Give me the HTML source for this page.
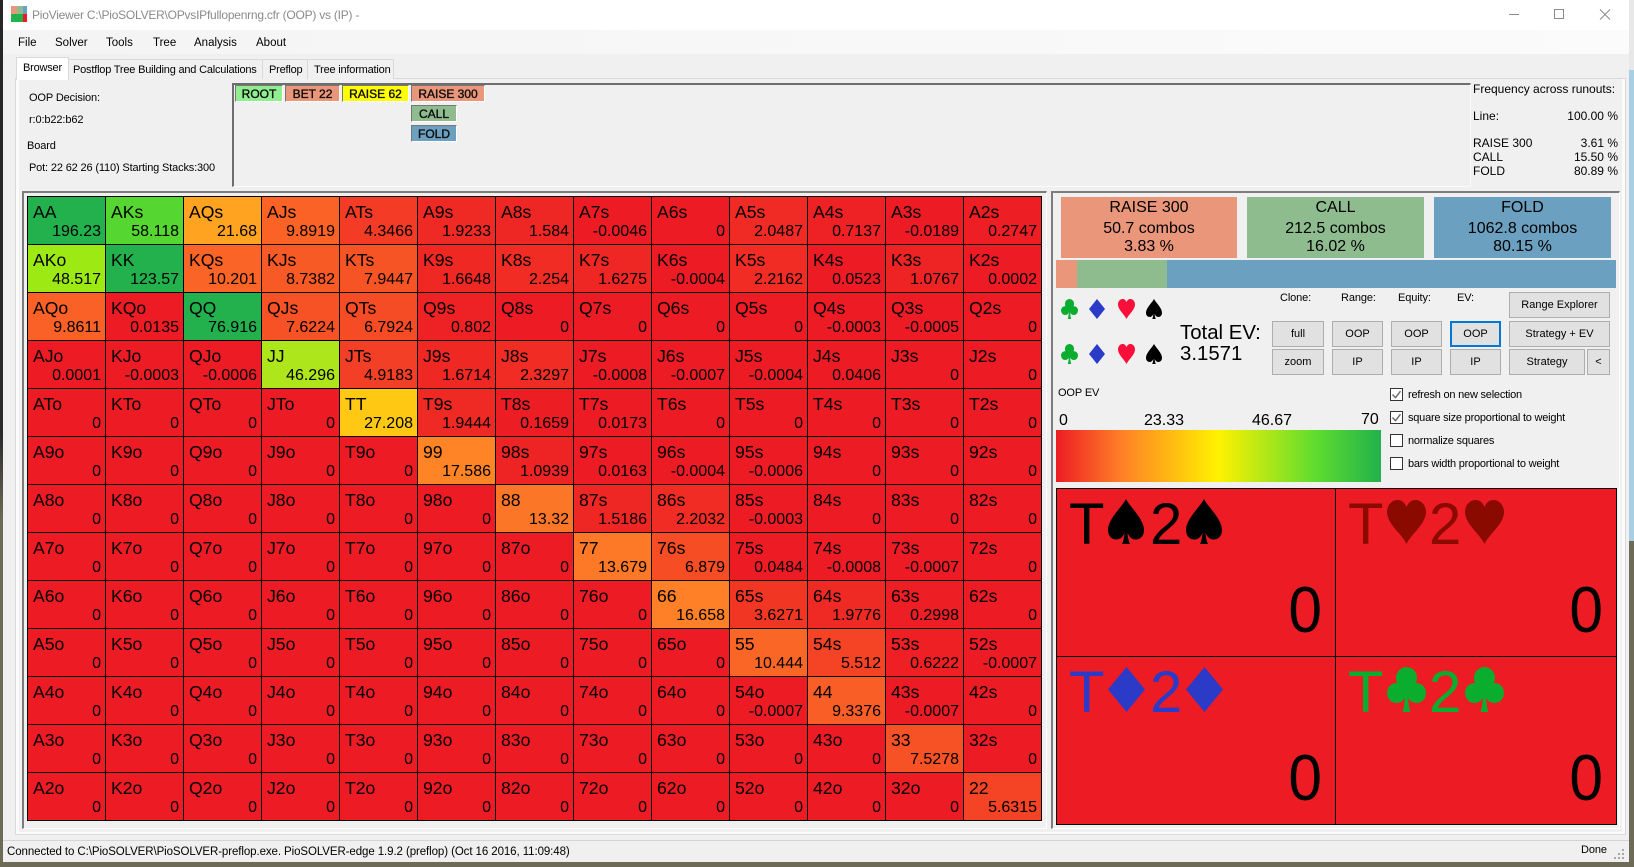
<!DOCTYPE html>
<html><head><meta charset="utf-8"><title>PioViewer</title>
<style>
html,body{margin:0;padding:0;background:#6e6a58}
body{width:1634px;height:867px;overflow:hidden;position:relative;font-family:"Liberation Sans",sans-serif;color:#000;font-size:11px;letter-spacing:-.12px}
.a{position:absolute;white-space:nowrap}
svg{position:absolute;display:block}
.win{position:absolute;left:3px;top:0;width:1626px;height:862px;background:#f0f0f0}
.tb{position:absolute;box-sizing:border-box;background:#e1e1e1;border:1px solid #adadad;font-size:11px;letter-spacing:0;text-align:center;line-height:24px;white-space:nowrap}
.tree{position:absolute;box-sizing:border-box;border:1px solid;border-color:#777 #fff #fff #777;font-size:12px;letter-spacing:0;text-align:center;line-height:16px;-webkit-text-stroke:.35px #000;color:#111}
.tab{position:absolute;box-sizing:border-box;border:1px solid #d9d9d9;border-bottom:0;background:#f0f0f0;top:59px;height:20px;font-size:11px;letter-spacing:-.2px;line-height:21px;white-space:nowrap}
.g{position:absolute;left:27px;top:196px;width:1015px;height:625px;box-sizing:border-box;display:grid;grid-template-columns:repeat(13,78px);grid-template-rows:repeat(13,48px);border-right:1px solid #000;border-bottom:1px solid #000;background:#ed1c24;letter-spacing:0}
.g p{margin:0;position:relative;box-sizing:border-box;border-left:1px solid #000;border-top:1px solid #000;background:#ed1c24;width:78px;height:48px}
.g b{position:absolute;left:5px;top:5px;font-weight:normal;font-size:17.6px;line-height:20px;white-space:nowrap}
.g i{position:absolute;right:4px;top:26px;font-style:normal;font-size:16px;line-height:18px;white-space:nowrap}
.box{position:absolute;top:197px;height:61px;text-align:center;font-size:16px;letter-spacing:0}
.box div{position:absolute;left:0;right:0;line-height:18px}
.cb{position:absolute;left:1390px;width:13px;height:13px;box-sizing:border-box;border:1px solid #333;background:#fff}
.cl{position:absolute;left:1408px;font-size:11px;letter-spacing:-.22px;white-space:nowrap;line-height:14px}
.card{position:absolute;font-size:58px;line-height:66px;white-space:nowrap;letter-spacing:0}
.z{position:absolute;font-size:65px;line-height:70px;width:60px;text-align:right;letter-spacing:0;transform:scaleX(.93);transform-origin:100% 50%}
.f{position:absolute;left:1473px;width:145px;font-size:12px;letter-spacing:0;line-height:14px;white-space:nowrap}
.f span{position:absolute;right:0;top:0}
.m{position:absolute;top:36px;font-size:11.5px;letter-spacing:0;line-height:15px;white-space:nowrap}
</style></head>
<body>
<div class="a" style="left:0;top:0;width:3px;height:867px;background:linear-gradient(#262626 0,#2a2a2a 50%,#6e6a58 60%)"></div>
<div class="a" style="left:1629px;top:0;width:5px;height:70px;background:#e8e8e8"></div>
<div class="a" style="left:1629px;top:70px;width:5px;height:471px;background:#a9cfe2"></div>
<div class="win"></div>

<!-- title bar -->
<div class="a" style="left:3px;top:0;width:1626px;height:30px;background:#fff"></div>
<div class="a" style="left:11px;top:6px;width:16px;height:8px;background:linear-gradient(90deg,#e9967a 0 37%,#8fbc8f 37% 75%,#6ca0c0 75%)"></div>
<div class="a" style="left:11px;top:14px;width:16px;height:8px;background:linear-gradient(90deg,#22b14c 0 75%,#ed1c24 75%)"></div>
<div class="a" style="left:32px;top:7px;font-size:12px;line-height:16px;color:#8a8a8a;letter-spacing:-.23px">PioViewer C:\PioSOLVER\OPvsIPfullopenrng.cfr (OOP) vs (IP) -</div>
<svg style="left:1505px;top:6px" width="120" height="16" viewBox="0 0 120 16" fill="none" stroke="#8a8a8a" stroke-width="1"><path d="M4 8.5H14"/><path d="M49.5 3.5h9v9h-9z"/><path d="M95 3.5l10 10M105 3.5l-10 10"/></svg>

<!-- menu -->
<div class="a" style="left:3px;top:30px;width:1626px;height:24px;background:linear-gradient(90deg,#f4f4f4,#fbfbfb)"></div>
<div class="m" style="left:18px">File</div>
<div class="m" style="left:55px">Solver</div>
<div class="m" style="left:106px">Tools</div>
<div class="m" style="left:153px">Tree</div>
<div class="m" style="left:194px">Analysis</div>
<div class="m" style="left:256px">About</div>

<!-- tab panel -->
<div class="a" style="left:15px;top:78px;width:1611px;height:757px;box-sizing:border-box;border:1px solid #d9d9d9;background:#fbfbfb"></div>
<div class="a" style="left:19px;top:79px;width:1603px;height:753px;background:#f0f0f0"></div>
<div class="tab" style="left:68px;width:195px;padding-left:4px">Postflop Tree Building and Calculations</div>
<div class="tab" style="left:262px;width:46px;padding-left:6px">Preflop</div>
<div class="tab" style="left:307px;width:87px;padding-left:6px">Tree information</div>
<div class="tab" style="left:16px;width:53px;top:57px;height:23px;padding-left:6px;background:#fff;z-index:2">Browser</div>

<!-- top-left info -->
<div class="a" style="left:29px;top:91px;line-height:14px">OOP Decision:</div>
<div class="a" style="left:29px;top:113px;line-height:14px">r:0:b22:b62</div>
<div class="a" style="left:27px;top:139px;line-height:14px">Board</div>
<div class="a" style="left:29px;top:161px;line-height:14px;letter-spacing:-.15px">Pot: 22 62 26 (110) Starting Stacks:300</div>

<!-- tree box -->
<div class="a" style="left:232px;top:83px;width:1239px;height:104px;box-sizing:border-box;border:2px solid #6e6e6e;border-right:1px solid #fbfbfb;border-bottom:1px solid #fbfbfb"></div>
<div class="tree" style="left:235px;top:85px;width:48px;height:17px;background:#90ee90">ROOT</div>
<div class="tree" style="left:285px;top:85px;width:55px;height:17px;background:#e9967a">BET 22</div>
<div class="tree" style="left:342px;top:85px;width:67px;height:17px;background:#ffff00">RAISE 62</div>
<div class="tree" style="left:411px;top:85px;width:74px;height:17px;background:#e9967a">RAISE 300</div>
<div class="tree" style="left:411px;top:105px;width:46px;height:17px;background:#8fbc8f">CALL</div>
<div class="tree" style="left:411px;top:125px;width:46px;height:17px;background:#6ca0c0">FOLD</div>

<!-- frequency -->
<div class="f" style="top:82px">Frequency across runouts:</div>
<div class="f" style="top:109px">Line:<span>100.00 %</span></div>
<div class="f" style="top:136px">RAISE 300<span>3.61 %</span></div>
<div class="f" style="top:150px">CALL<span>15.50 %</span></div>
<div class="f" style="top:164px">FOLD<span>80.89 %</span></div>

<!-- grid frame -->
<div class="a" style="left:22px;top:191px;width:1025px;height:638px;box-sizing:border-box;border:2px solid #7c7c7c;border-right:1px solid #fff;border-bottom:1px solid #fff"></div>
<div class="g">
<p style="background:#22b14c"><b>AA</b><i>196.23</i></p><p style="background:#55d630"><b>AKs</b><i>58.118</i></p><p style="background:#ffa320"><b>AQs</b><i>21.68</i></p><p style="background:#fa6226"><b>AJs</b><i>9.8919</i></p><p style="background:#f33b25"><b>ATs</b><i>4.3466</i></p><p style="background:#ef2a24"><b>A9s</b><i>1.9233</i></p><p style="background:#ef2724"><b>A8s</b><i>1.584</i></p><p><b>A7s</b><i>-0.0046</i></p><p><b>A6s</b><i>0</i></p><p style="background:#f02a24"><b>A5s</b><i>2.0487</i></p><p style="background:#ee2124"><b>A4s</b><i>0.7137</i></p><p><b>A3s</b><i>-0.0189</i></p><p style="background:#ed1e24"><b>A2s</b><i>0.2747</i></p>
<p style="background:#9ce914"><b>AKo</b><i>48.517</i></p><p style="background:#22b14c"><b>KK</b><i>123.57</i></p><p style="background:#fa6426"><b>KQs</b><i>10.201</i></p><p style="background:#f85a26"><b>KJs</b><i>8.7382</i></p><p style="background:#f75426"><b>KTs</b><i>7.9447</i></p><p style="background:#ef2824"><b>K9s</b><i>1.6648</i></p><p style="background:#f02c24"><b>K8s</b><i>2.254</i></p><p style="background:#ef2724"><b>K7s</b><i>1.6275</i></p><p><b>K6s</b><i>-0.0004</i></p><p style="background:#f02c24"><b>K5s</b><i>2.2162</i></p><p><b>K4s</b><i>0.0523</i></p><p style="background:#ee2424"><b>K3s</b><i>1.0767</i></p><p><b>K2s</b><i>0.0002</i></p>
<p style="background:#fa6126"><b>AQo</b><i>9.8611</i></p><p><b>KQo</b><i>0.0135</i></p><p style="background:#22b14c"><b>QQ</b><i>76.916</i></p><p style="background:#f75226"><b>QJs</b><i>7.6224</i></p><p style="background:#f64c25"><b>QTs</b><i>6.7924</i></p><p style="background:#ee2224"><b>Q9s</b><i>0.802</i></p><p><b>Q8s</b><i>0</i></p><p><b>Q7s</b><i>0</i></p><p><b>Q6s</b><i>0</i></p><p><b>Q5s</b><i>0</i></p><p><b>Q4s</b><i>-0.0003</i></p><p><b>Q3s</b><i>-0.0005</i></p><p><b>Q2s</b><i>0</i></p>
<p><b>AJo</b><i>0.0001</i></p><p><b>KJo</b><i>-0.0003</i></p><p><b>QJo</b><i>-0.0006</i></p><p style="background:#aee61c"><b>JJ</b><i>46.296</i></p><p style="background:#f33f25"><b>JTs</b><i>4.9183</i></p><p style="background:#ef2824"><b>J9s</b><i>1.6714</i></p><p style="background:#f02c24"><b>J8s</b><i>2.3297</i></p><p><b>J7s</b><i>-0.0008</i></p><p><b>J6s</b><i>-0.0007</i></p><p><b>J5s</b><i>-0.0004</i></p><p><b>J4s</b><i>0.0406</i></p><p><b>J3s</b><i>0</i></p><p><b>J2s</b><i>0</i></p>
<p><b>ATo</b><i>0</i></p><p><b>KTo</b><i>0</i></p><p><b>QTo</b><i>0</i></p><p><b>JTo</b><i>0</i></p><p style="background:#ffc812"><b>TT</b><i>27.208</i></p><p style="background:#ef2a24"><b>T9s</b><i>1.9444</i></p><p style="background:#ed1d24"><b>T8s</b><i>0.1659</i></p><p><b>T7s</b><i>0.0173</i></p><p><b>T6s</b><i>0</i></p><p><b>T5s</b><i>0</i></p><p><b>T4s</b><i>0</i></p><p><b>T3s</b><i>0</i></p><p><b>T2s</b><i>0</i></p>
<p><b>A9o</b><i>0</i></p><p><b>K9o</b><i>0</i></p><p><b>Q9o</b><i>0</i></p><p><b>J9o</b><i>0</i></p><p><b>T9o</b><i>0</i></p><p style="background:#ff8426"><b>99</b><i>17.586</i></p><p style="background:#ee2424"><b>98s</b><i>1.0939</i></p><p><b>97s</b><i>0.0163</i></p><p><b>96s</b><i>-0.0004</i></p><p><b>95s</b><i>-0.0006</i></p><p><b>94s</b><i>0</i></p><p><b>93s</b><i>0</i></p><p><b>92s</b><i>0</i></p>
<p><b>A8o</b><i>0</i></p><p><b>K8o</b><i>0</i></p><p><b>Q8o</b><i>0</i></p><p><b>J8o</b><i>0</i></p><p><b>T8o</b><i>0</i></p><p><b>98o</b><i>0</i></p><p style="background:#fc7627"><b>88</b><i>13.32</i></p><p style="background:#ef2724"><b>87s</b><i>1.5186</i></p><p style="background:#f02c24"><b>86s</b><i>2.2032</i></p><p><b>85s</b><i>-0.0003</i></p><p><b>84s</b><i>0</i></p><p><b>83s</b><i>0</i></p><p><b>82s</b><i>0</i></p>
<p><b>A7o</b><i>0</i></p><p><b>K7o</b><i>0</i></p><p><b>Q7o</b><i>0</i></p><p><b>J7o</b><i>0</i></p><p><b>T7o</b><i>0</i></p><p><b>97o</b><i>0</i></p><p><b>87o</b><i>0</i></p><p style="background:#fd7827"><b>77</b><i>13.679</i></p><p style="background:#f64d25"><b>76s</b><i>6.879</i></p><p><b>75s</b><i>0.0484</i></p><p><b>74s</b><i>-0.0008</i></p><p><b>73s</b><i>-0.0007</i></p><p><b>72s</b><i>0</i></p>
<p><b>A6o</b><i>0</i></p><p><b>K6o</b><i>0</i></p><p><b>Q6o</b><i>0</i></p><p><b>J6o</b><i>0</i></p><p><b>T6o</b><i>0</i></p><p><b>96o</b><i>0</i></p><p><b>86o</b><i>0</i></p><p><b>76o</b><i>0</i></p><p style="background:#ff8026"><b>66</b><i>16.658</i></p><p style="background:#f23624"><b>65s</b><i>3.6271</i></p><p style="background:#ef2a24"><b>64s</b><i>1.9776</i></p><p style="background:#ed1e24"><b>63s</b><i>0.2998</i></p><p><b>62s</b><i>0</i></p>
<p><b>A5o</b><i>0</i></p><p><b>K5o</b><i>0</i></p><p><b>Q5o</b><i>0</i></p><p><b>J5o</b><i>0</i></p><p><b>T5o</b><i>0</i></p><p><b>95o</b><i>0</i></p><p><b>85o</b><i>0</i></p><p><b>75o</b><i>0</i></p><p><b>65o</b><i>0</i></p><p style="background:#fa6626"><b>55</b><i>10.444</i></p><p style="background:#f44325"><b>54s</b><i>5.512</i></p><p style="background:#ee2024"><b>53s</b><i>0.6222</i></p><p><b>52s</b><i>-0.0007</i></p>
<p><b>A4o</b><i>0</i></p><p><b>K4o</b><i>0</i></p><p><b>Q4o</b><i>0</i></p><p><b>J4o</b><i>0</i></p><p><b>T4o</b><i>0</i></p><p><b>94o</b><i>0</i></p><p><b>84o</b><i>0</i></p><p><b>74o</b><i>0</i></p><p><b>64o</b><i>0</i></p><p><b>54o</b><i>-0.0007</i></p><p style="background:#f95e26"><b>44</b><i>9.3376</i></p><p><b>43s</b><i>-0.0007</i></p><p><b>42s</b><i>0</i></p>
<p><b>A3o</b><i>0</i></p><p><b>K3o</b><i>0</i></p><p><b>Q3o</b><i>0</i></p><p><b>J3o</b><i>0</i></p><p><b>T3o</b><i>0</i></p><p><b>93o</b><i>0</i></p><p><b>83o</b><i>0</i></p><p><b>73o</b><i>0</i></p><p><b>63o</b><i>0</i></p><p><b>53o</b><i>0</i></p><p><b>43o</b><i>0</i></p><p style="background:#f75126"><b>33</b><i>7.5278</i></p><p><b>32s</b><i>0</i></p>
<p><b>A2o</b><i>0</i></p><p><b>K2o</b><i>0</i></p><p><b>Q2o</b><i>0</i></p><p><b>J2o</b><i>0</i></p><p><b>T2o</b><i>0</i></p><p><b>92o</b><i>0</i></p><p><b>82o</b><i>0</i></p><p><b>72o</b><i>0</i></p><p><b>62o</b><i>0</i></p><p><b>52o</b><i>0</i></p><p><b>42o</b><i>0</i></p><p><b>32o</b><i>0</i></p><p style="background:#f44425"><b>22</b><i>5.6315</i></p>
</div>

<!-- right frame -->
<div class="a" style="left:1051px;top:191px;width:569px;height:638px;box-sizing:border-box;border:2px solid #7c7c7c;border-right:1px solid #fff;border-bottom:1px solid #fff"></div>

<div class="box" style="left:1061px;width:176px;background:#e9967a"><div style="top:2px">RAISE 300</div><div style="top:23px">50.7 combos</div><div style="top:41px">3.83 %</div></div>
<div class="box" style="left:1247px;width:177px;background:#8fbc8f"><div style="top:2px">CALL</div><div style="top:23px">212.5 combos</div><div style="top:41px">16.02 %</div></div>
<div class="box" style="left:1434px;width:177px;background:#6ca0c0"><div style="top:2px">FOLD</div><div style="top:23px">1062.8 combos</div><div style="top:41px">80.15 %</div></div>

<div class="a" style="left:1056px;top:260px;width:21px;height:28px;background:#e9967a"></div>
<div class="a" style="left:1077px;top:260px;width:90px;height:28px;background:#8fbc8f"></div>
<div class="a" style="left:1167px;top:260px;width:449px;height:28px;background:#6ca0c0"></div>

<!-- small suit icons, row 1 -->
<svg style="left:1061px;top:299px" width="17" height="20" viewBox="0 0 39 45" preserveAspectRatio="none" fill="#0aad2e"><ellipse cx="19.5" cy="11" rx="10.5" ry="11"/><ellipse cx="9.5" cy="26" rx="9.5" ry="10"/><ellipse cx="29.5" cy="26" rx="9.5" ry="10"/><path d="M18 18h3c0 14 .5 22 2.5 27h-8c2-5 2.5-13 2.5-27z"/></svg>
<svg style="left:1089px;top:299px" width="16" height="20" viewBox="0 0 37 45" preserveAspectRatio="none" fill="#2b3ac7"><path d="M18.5 0L37 22.5 18.5 45 0 22.5z"/></svg>
<svg style="left:1118px;top:299px" width="17" height="20" viewBox="0 0 39 44" preserveAspectRatio="none" fill="#f8103a"><path d="M19.5 44C15 34 0 24 0 12 0 5 5 0 10.5 0 15 0 18 3 19.5 7 21 3 24 0 28.5 0 34 0 39 5 39 12 39 24 24 34 19.5 44z"/></svg>
<svg style="left:1146px;top:299px" width="16" height="20" viewBox="0 0 36 45" preserveAspectRatio="none" fill="#000"><path d="M18 0C22 8 36 20 36 31 36 38 31 41 27 40.5 23 40 20.5 37 19.5 33.5 19.8 38 20.5 42 22 45L14 45C15.5 42 16.2 38 16.5 33.5 15.5 37 13 40 9 40.5 5 41 0 38 0 31 0 20 14 8 18 0z"/></svg>
<!-- small suit icons, row 2 -->
<svg style="left:1061px;top:344px" width="17" height="20" viewBox="0 0 39 45" preserveAspectRatio="none" fill="#0aad2e"><ellipse cx="19.5" cy="11" rx="10.5" ry="11"/><ellipse cx="9.5" cy="26" rx="9.5" ry="10"/><ellipse cx="29.5" cy="26" rx="9.5" ry="10"/><path d="M18 18h3c0 14 .5 22 2.5 27h-8c2-5 2.5-13 2.5-27z"/></svg>
<svg style="left:1089px;top:344px" width="16" height="20" viewBox="0 0 37 45" preserveAspectRatio="none" fill="#2b3ac7"><path d="M18.5 0L37 22.5 18.5 45 0 22.5z"/></svg>
<svg style="left:1118px;top:344px" width="17" height="20" viewBox="0 0 39 44" preserveAspectRatio="none" fill="#f8103a"><path d="M19.5 44C15 34 0 24 0 12 0 5 5 0 10.5 0 15 0 18 3 19.5 7 21 3 24 0 28.5 0 34 0 39 5 39 12 39 24 24 34 19.5 44z"/></svg>
<svg style="left:1146px;top:344px" width="16" height="20" viewBox="0 0 36 45" preserveAspectRatio="none" fill="#000"><path d="M18 0C22 8 36 20 36 31 36 38 31 41 27 40.5 23 40 20.5 37 19.5 33.5 19.8 38 20.5 42 22 45L14 45C15.5 42 16.2 38 16.5 33.5 15.5 37 13 40 9 40.5 5 41 0 38 0 31 0 20 14 8 18 0z"/></svg>

<div class="a" style="left:1180px;top:321px;font-size:20.4px;letter-spacing:0;line-height:24px">Total EV:</div>
<div class="a" style="left:1180px;top:342px;font-size:20.4px;letter-spacing:0;line-height:24px">3.1571</div>

<div class="a" style="left:1280px;top:291px;line-height:14px">Clone:</div>
<div class="a" style="left:1341px;top:291px;line-height:14px">Range:</div>
<div class="a" style="left:1398px;top:291px;line-height:14px">Equity:</div>
<div class="a" style="left:1457px;top:291px;line-height:14px">EV:</div>

<div class="tb" style="left:1509px;top:292px;width:101px;height:26px">Range Explorer</div>
<div class="tb" style="left:1272px;top:321px;width:52px;height:26px">full</div>
<div class="tb" style="left:1332px;top:321px;width:51px;height:26px">OOP</div>
<div class="tb" style="left:1391px;top:321px;width:51px;height:26px">OOP</div>
<div class="tb" style="left:1450px;top:321px;width:51px;height:26px;border:2px solid #0078d7;line-height:22px">OOP</div>
<div class="tb" style="left:1509px;top:321px;width:101px;height:26px">Strategy + EV</div>
<div class="tb" style="left:1272px;top:349px;width:52px;height:26px">zoom</div>
<div class="tb" style="left:1332px;top:349px;width:51px;height:26px">IP</div>
<div class="tb" style="left:1391px;top:349px;width:51px;height:26px">IP</div>
<div class="tb" style="left:1450px;top:349px;width:51px;height:26px">IP</div>
<div class="tb" style="left:1509px;top:349px;width:76px;height:26px">Strategy</div>
<div class="tb" style="left:1587px;top:349px;width:23px;height:26px">&lt;</div>

<div class="a" style="left:1058px;top:386px;line-height:14px">OOP EV</div>
<div class="a" style="left:1059px;top:412px;font-size:16px;letter-spacing:0;line-height:18px">0</div>
<div class="a" style="left:1144px;top:412px;font-size:16px;letter-spacing:0;line-height:18px">23.33</div>
<div class="a" style="left:1252px;top:412px;font-size:16px;letter-spacing:0;line-height:18px">46.67</div>
<div class="a" style="left:1361px;top:411px;font-size:16px;letter-spacing:0;line-height:18px">70</div>
<div class="a" style="left:1056px;top:430px;width:325px;height:52px;background:linear-gradient(90deg,#ed1c24 0,#ff7f27 20%,#fff200 50%,#5edc2f 80%,#22b14c 100%)"></div>

<div class="cb" style="top:388px"></div><svg style="left:1390px;top:388px" width="13" height="13" fill="none" stroke="#666" stroke-width="1.4"><path d="M2.5 6.5l3 3.2 5-6.5"/></svg>
<div class="cl" style="top:388px">refresh on new selection</div>
<div class="cb" style="top:411px"></div><svg style="left:1390px;top:411px" width="13" height="13" fill="none" stroke="#666" stroke-width="1.4"><path d="M2.5 6.5l3 3.2 5-6.5"/></svg>
<div class="cl" style="top:411px">square size proportional to weight</div>
<div class="cb" style="top:434px"></div>
<div class="cl" style="top:434px">normalize squares</div>
<div class="cb" style="top:457px"></div>
<div class="cl" style="top:457px">bars width proportional to weight</div>

<!-- cards -->
<div class="a" style="left:1056px;top:488px;width:561px;height:337px;box-sizing:border-box;border:1px solid #000;background:#ed1c24"></div>
<div class="a" style="left:1335px;top:488px;width:1px;height:337px;background:#000"></div>
<div class="a" style="left:1056px;top:656px;width:561px;height:1px;background:#000"></div>

<div class="card" style="left:1069px;top:492px;color:#000">T</div>
<div class="card" style="left:1150px;top:492px;color:#000">2</div>
<svg style="left:1108px;top:499px" width="36" height="45" viewBox="0 0 36 45" fill="#000"><path d="M18 0C22 8 36 20 36 31 36 38 31 41 27 40.5 23 40 20.5 37 19.5 33.5 19.8 38 20.5 42 22 45L14 45C15.5 42 16.2 38 16.5 33.5 15.5 37 13 40 9 40.5 5 41 0 38 0 31 0 20 14 8 18 0z"/></svg>
<svg style="left:1186px;top:499px" width="36" height="45" viewBox="0 0 36 45" fill="#000"><path d="M18 0C22 8 36 20 36 31 36 38 31 41 27 40.5 23 40 20.5 37 19.5 33.5 19.8 38 20.5 42 22 45L14 45C15.5 42 16.2 38 16.5 33.5 15.5 37 13 40 9 40.5 5 41 0 38 0 31 0 20 14 8 18 0z"/></svg>

<div class="card" style="left:1348px;top:492px;color:#8b0a00">T</div>
<div class="card" style="left:1429px;top:492px;color:#8b0a00">2</div>
<svg style="left:1387px;top:500px" width="39" height="44" viewBox="0 0 39 44" fill="#8b0a00"><path d="M19.5 44C15 34 0 24 0 12 0 5 5 0 10.5 0 15 0 18 3 19.5 7 21 3 24 0 28.5 0 34 0 39 5 39 12 39 24 24 34 19.5 44z"/></svg>
<svg style="left:1465px;top:500px" width="39" height="44" viewBox="0 0 39 44" fill="#8b0a00"><path d="M19.5 44C15 34 0 24 0 12 0 5 5 0 10.5 0 15 0 18 3 19.5 7 21 3 24 0 28.5 0 34 0 39 5 39 12 39 24 24 34 19.5 44z"/></svg>

<div class="card" style="left:1069px;top:660px;color:#2b3ac7">T</div>
<div class="card" style="left:1150px;top:660px;color:#2b3ac7">2</div>
<svg style="left:1108px;top:667px" width="37" height="45" viewBox="0 0 37 45" fill="#2b3ac7"><path d="M18.5 0L37 22.5 18.5 45 0 22.5z"/></svg>
<svg style="left:1186px;top:667px" width="37" height="45" viewBox="0 0 37 45" fill="#2b3ac7"><path d="M18.5 0L37 22.5 18.5 45 0 22.5z"/></svg>

<div class="card" style="left:1348px;top:660px;color:#0aad2e">T</div>
<div class="card" style="left:1429px;top:660px;color:#0aad2e">2</div>
<svg style="left:1387px;top:667px" width="39" height="45" viewBox="0 0 39 45" fill="#0aad2e"><ellipse cx="19.5" cy="11" rx="10.5" ry="11"/><ellipse cx="9.5" cy="26" rx="9.5" ry="10"/><ellipse cx="29.5" cy="26" rx="9.5" ry="10"/><path d="M18 18h3c0 14 .5 22 2.5 27h-8c2-5 2.5-13 2.5-27z"/></svg>
<svg style="left:1465px;top:667px" width="39" height="45" viewBox="0 0 39 45" fill="#0aad2e"><ellipse cx="19.5" cy="11" rx="10.5" ry="11"/><ellipse cx="9.5" cy="26" rx="9.5" ry="10"/><ellipse cx="29.5" cy="26" rx="9.5" ry="10"/><path d="M18 18h3c0 14 .5 22 2.5 27h-8c2-5 2.5-13 2.5-27z"/></svg>

<div class="z" style="left:1262px;top:575px">0</div>
<div class="z" style="left:1543px;top:575px">0</div>
<div class="z" style="left:1262px;top:743px">0</div>
<div class="z" style="left:1543px;top:743px">0</div>

<!-- status bar -->
<div class="a" style="left:3px;top:840px;width:1626px;height:1px;background:#d4d4d4"></div>
<div class="a" style="left:7px;top:845px;font-size:11.5px;letter-spacing:-.09px;line-height:15px">Connected to C:\PioSOLVER\PioSOLVER-preflop.exe. PioSOLVER-edge 1.9.2 (preflop) (Oct 16 2016, 11:09:48)</div>
<div class="a" style="left:1581px;top:843px;font-size:11px;line-height:14px">Done</div>
<svg style="left:1614px;top:848px" width="12" height="12" fill="#a8a8a8"><rect x="8" y="1" width="2" height="2"/><rect x="4" y="5" width="2" height="2"/><rect x="8" y="5" width="2" height="2"/><rect x="0" y="9" width="2" height="2"/><rect x="4" y="9" width="2" height="2"/><rect x="8" y="9" width="2" height="2"/></svg>
</body></html>
